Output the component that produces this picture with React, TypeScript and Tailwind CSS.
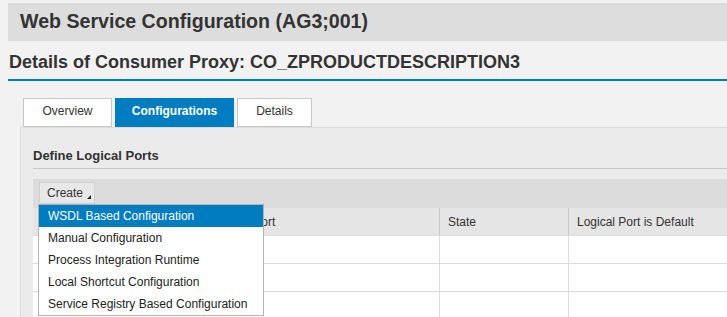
import React from "react";

const items = [
  "WSDL Based Configuration",
  "Manual Configuration",
  "Process Integration Runtime",
  "Local Shortcut Configuration",
  "Service Registry Based Configuration",
];

export default function App() {
  return (
    <div
      className="w-[727px] h-[317px] overflow-hidden bg-[#f2f2f2] text-[#333333]"
      style={{ fontFamily: '"Liberation Sans", Arial, sans-serif' }}
    >
      {/* Title bar */}
      <div className="pt-[3px] pl-[8px]">
        <div className="h-[38px] bg-[#dddddd] flex items-center pl-[12px] text-[19.6px] font-bold leading-none">
          Web Service Configuration (AG3;001)
        </div>
      </div>

      {/* Details heading */}
      <div className="ml-[8px] mt-[11px] border-b-2 border-[#007cc0] pb-[6px] pl-[1px] text-[18px] leading-[21px] font-bold">
        Details of Consumer Proxy: CO_ZPRODUCTDESCRIPTION3
      </div>

      {/* Tabs */}
      <div className="mt-[17px] pl-[23px] flex gap-[3px] h-[29px] text-[12px]">
        <div className="w-[89px] h-[29px] bg-white border border-[#c8c8c8] flex items-center justify-center pb-[3px]">
          Overview
        </div>
        <div className="w-[119px] h-[29px] bg-[#007cc0] text-white font-bold flex items-center justify-center pb-[3px]">
          Configurations
        </div>
        <div className="w-[75px] h-[29px] bg-white border border-[#c8c8c8] flex items-center justify-center pb-[3px]">
          Details
        </div>
      </div>

      {/* Panel */}
      <div className="ml-[20px] border-l border-t border-[#dcdcdc] bg-[#ebebeb] h-[300px] pl-[12px] pt-[20px]">
        <div className="text-[13px] leading-[16px] font-bold pb-[4px] border-b border-[#c8c8c8]">
          Define Logical Ports
        </div>

        {/* Toolbar */}
        <div className="mt-[10px] h-[29px] bg-[#dcdcdc] pl-[6px] pt-[3px] flex items-start">
          <div className="relative">
            <div className="h-[22px] w-[56px] bg-[#e8e8e8] border border-[#cfcfcf] flex items-center pl-[7px] text-[12px] leading-none">
              <span>Create</span>
              <svg
                className="ml-[4px] mt-[8px]"
                width="4"
                height="4"
                viewBox="0 0 4 4"
              >
                <polygon points="4,0 4,4 0,4" fill="#222" />
              </svg>
            </div>

            {/* Dropdown menu */}
            <div className="absolute left-[-1px] top-full z-10 w-[226px] bg-white border border-[#b4b4b4] text-[12px]">
              {items.map((it, i) => (
                <div
                  key={it}
                  className={
                    "h-[22px] flex items-center pl-[9px] " +
                    (i === 0 ? "bg-[#007cc0] text-white" : "text-[#222222]")
                  }
                >
                  {it}
                </div>
              ))}
            </div>
          </div>
        </div>

        {/* Table */}
        <div className="text-[12px]">
          <div className="flex h-[28px] bg-[#e5e5e5] border-b border-[#dcdcdc]">
            <div className="w-[172px] border-r border-[#c8c8c8]"></div>
            <div className="w-[235px] border-r border-[#c8c8c8] flex items-center pl-[7px]">
              Logical Port
            </div>
            <div className="w-[129px] border-r border-[#c8c8c8] flex items-center pl-[8px]">
              State
            </div>
            <div className="flex-1 flex items-center pl-[8px]">
              Logical Port is Default
            </div>
          </div>
          {[0, 1, 2].map((r) => (
            <div key={r} className="flex h-[28px] bg-white border-b border-[#dcdcdc]">
              <div className="w-[172px] border-r border-[#dcdcdc]"></div>
              <div className="w-[235px] border-r border-[#dcdcdc]"></div>
              <div className="w-[129px] border-r border-[#dcdcdc]"></div>
              <div className="flex-1"></div>
            </div>
          ))}
        </div>
      </div>
    </div>
  );
}
